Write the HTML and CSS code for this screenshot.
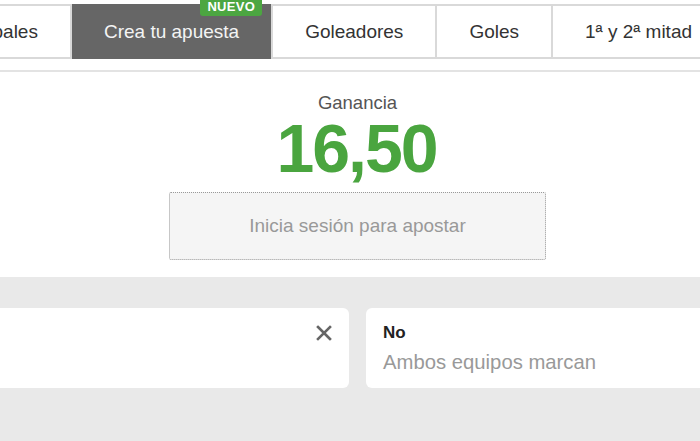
FILE: index.html
```html
<!DOCTYPE html>
<html lang="es">
<head>
    <meta charset="UTF-8">
    <meta name="viewport" content="width=device-width, initial-scale=1.0">
    <title>Crea tu apuesta</title>
    <link rel="stylesheet" href="styles.css">
</head>
<body>
    <!-- Pestañas de mercados -->
    <div class="tabs">
        <div class="tab">Principales</div>
        <div class="tab active">
            Crea tu apuesta
            <span class="badge">NUEVO</span>
        </div>
        <div class="tab">Goleadores</div>
        <div class="tab">Goles</div>
        <div class="tab">1ª y 2ª mitad</div>
    </div>

    <div class="summary">
        <p class="label">Ganancia</p>
        <p class="amount">16,50</p>
        <div class="login">Inicia sesión para apostar</div>
    </div>

    <!-- Selecciones -->
    <div class="selections">
        <div class="card">
            <div class="card-text"></div>
            <button class="remove" aria-label="Quitar">
                <svg width="16" height="16" viewBox="0 0 16 16">
                    <path d="M2 2 L14 14 M14 2 L2 14" stroke="#666" stroke-width="2.6" stroke-linecap="square" fill="none"/>
                </svg>
            </button>
        </div>
        <div class="card">
            <div class="card-text">
                <p class="pick">No</p>
                <p class="market">Ambos equipos marcan</p>
            </div>
        </div>
    </div>
</body>
</html>
```

FILE: styles.css
```css
body {
    font-family: "Liberation Sans", Arial, sans-serif;
    background-color: #fff;
    margin: 0;
    padding: 0;
    color: #333;
    overflow: hidden;
}

p {
    margin: 0;
}

.tabs {
    display: flex;
    margin-top: 4px;
    margin-left: -87px;
    border-top: 2px solid #d9d9d9;
    border-bottom: 2px solid #d9d9d9;
    height: 51px;
    white-space: nowrap;
}

.tab {
    position: relative;
    display: flex;
    align-items: center;
    padding: 0 32px;
    font-size: 19px;
    color: #333;
    border-left: 2px solid #d9d9d9;
}

.tab:first-child {
    border-left: none;
}

.tab.active {
    background-color: #666;
    color: #f4f4f4;
    margin: -2px 0;
    border-left-color: #d9d9d9;
}

.badge {
    position: absolute;
    right: 9px;
    top: -8px;
    background-color: #4ca641;
    color: #fff;
    font-size: 13px;
    font-weight: bold;
    letter-spacing: 0.3px;
    padding: 4px 7px 2px;
    border-radius: 3px;
    line-height: 14px;
}

.summary {
    border-top: 2px solid #e3e3e3;
    margin-top: 11px;
    padding: 21px 0 17px 15px;
    display: flex;
    flex-direction: column;
    align-items: center;
}

.label {
    font-size: 18.5px;
    line-height: 20px;
    color: #555;
}

.amount {
    margin-top: 7px;
    font-size: 68px;
    line-height: 56px;
    font-weight: bold;
    color: #4aa53f;
    letter-spacing: -2px;
    padding-right: 2px;
}

.login {
    margin-top: 16px;
    width: 375px;
    height: 66px;
    border: 1px dotted #999;
    border-radius: 2px;
    background-color: #f5f5f5;
    color: #999;
    font-size: 19px;
    display: flex;
    align-items: center;
    justify-content: center;
}

.selections {
    background-color: #e9e9e9;
    height: 133px;
    padding-top: 31px;
    display: grid;
    grid-template-columns: 369px 369px;
    grid-auto-rows: 80px;
    gap: 17px;
    margin-left: -20px;
}

.card {
    background-color: #fff;
    border-radius: 6px;
    display: flex;
    justify-content: space-between;
    align-items: flex-start;
    padding: 15px 17px 14px;
}

.pick {
    font-size: 17px;
    line-height: 20px;
    font-weight: bold;
    color: #222;
}

.market {
    margin-top: 8px;
    font-size: 20.3px;
    line-height: 22px;
    color: #999;
}

.remove {
    border: none;
    background: none;
    padding: 0;
    margin-top: 2px;
    cursor: pointer;
}
```
